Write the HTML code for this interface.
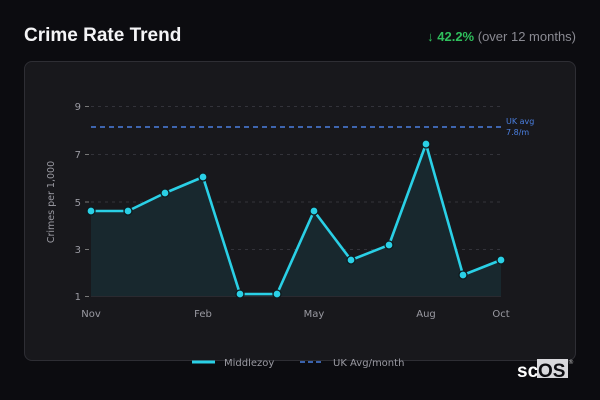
<!DOCTYPE html>
<html><head><meta charset="utf-8"><style>
html,body{margin:0;padding:0;width:600px;height:400px;background:#0c0c10;overflow:hidden;font-family:"DejaVu Sans","Liberation Sans",sans-serif;}
.title{position:absolute;left:24px;top:25px;color:#f4f4f6;font-size:19px;font-weight:bold;font-family:"Liberation Sans",sans-serif;}
.stat{position:absolute;right:24px;top:29px;font-size:13px;color:#8a8a92;font-family:"Liberation Sans",sans-serif;}
.stat b{color:#2fbf5c;}
.card{position:absolute;left:24px;top:61px;width:552px;height:300px;background:#18181c;border:1px solid #2e2e34;border-radius:8px;box-sizing:border-box;}
svg{position:absolute;left:0;top:0;}
</style></head><body>
<div class="title">Crime Rate Trend</div>
<div class="stat"><b>↓ 42.2%</b> (over 12 months)</div>
<div class="card"></div>
<svg width="600" height="400" font-family="DejaVu Sans, Liberation Sans, sans-serif">
<g stroke="#33333a" stroke-dasharray="3,4" stroke-width="1">
<line x1="91" y1="106.5" x2="501" y2="106.5"/>
<line x1="91" y1="154.5" x2="501" y2="154.5"/>
<line x1="91" y1="202" x2="501" y2="202"/>
<line x1="91" y1="249.5" x2="501" y2="249.5"/>
</g>
<g stroke="#777" stroke-width="1">
<line x1="85" y1="106.5" x2="89" y2="106.5"/>
<line x1="85" y1="154.5" x2="89" y2="154.5"/>
<line x1="85" y1="202" x2="89" y2="202"/>
<line x1="85" y1="249.5" x2="89" y2="249.5"/>
<line x1="85" y1="296.5" x2="89" y2="296.5"/>
</g>
<g fill="#9a9aa2" font-size="10" text-anchor="end">
<text x="81" y="110">9</text><text x="81" y="158">7</text><text x="81" y="206">5</text><text x="81" y="253">3</text><text x="81" y="300">1</text>
</g>
<text transform="translate(54,202) rotate(-90)" fill="#9a9aa2" font-size="9.5" text-anchor="middle">Crimes per 1,000</text>
<g fill="#9a9aa2" font-size="10" text-anchor="middle">
<text x="91" y="317">Nov</text><text x="203" y="317">Feb</text><text x="314" y="317">May</text><text x="426" y="317">Aug</text><text x="501" y="317">Oct</text>
</g>
<polygon fill="#18282e" points="91,296.5 91,211 128,211 165,193 203,177 240,294 277,294 314,211 351,260 389,245 426,144 463,275 501,260 501,296.5"/>
<line x1="91" y1="296.5" x2="501" y2="296.5" stroke="#2a2a30"/>
<line x1="91" y1="127" x2="501" y2="127" stroke="#4a7fe0" stroke-width="1.5" stroke-dasharray="5,4"/>
<text x="506" y="124" fill="#4a7fe0" font-size="8">UK avg</text>
<text x="506" y="135" fill="#4a7fe0" font-size="8">7.8/m</text>
<polyline fill="none" stroke="#2ad0e6" stroke-width="2.6" stroke-linejoin="round" points="91,211 128,211 165,193 203,177 240,294 277,294 314,211 351,260 389,245 426,144 463,275 501,260"/>
<g fill="#2ad0e6" stroke="#0f1a1e" stroke-width="1.3">
<circle cx="91" cy="211" r="4"/><circle cx="128" cy="211" r="4"/><circle cx="165" cy="193" r="4"/><circle cx="203" cy="177" r="4"/><circle cx="240" cy="294" r="4"/><circle cx="277" cy="294" r="4"/><circle cx="314" cy="211" r="4"/><circle cx="351" cy="260" r="4"/><circle cx="389" cy="245" r="4"/><circle cx="426" cy="144" r="4"/><circle cx="463" cy="275" r="4"/><circle cx="501" cy="260" r="4"/>
</g>
<line x1="192" y1="362" x2="215" y2="362" stroke="#2ad0e6" stroke-width="3"/>
<text x="224" y="366" fill="#9a9aa2" font-size="10">Middlezoy</text>
<line x1="300" y1="362" x2="323" y2="362" stroke="#4a7fe0" stroke-width="1.5" stroke-dasharray="5,3"/>
<text x="333" y="366" fill="#9a9aa2" font-size="10">UK Avg/month</text>
<rect x="537" y="359" width="31" height="19" fill="#d8d8dc"/>
<text x="517" y="377" fill="#ffffff" font-size="19" font-weight="bold" font-family="Liberation Sans, sans-serif">sc</text>
<text x="538" y="377" fill="#0c0c10" font-size="19" font-weight="bold" font-family="Liberation Sans, sans-serif">OS</text>
<text x="568" y="364" fill="#bbb" font-size="6">®</text>
</svg>
</body></html>
